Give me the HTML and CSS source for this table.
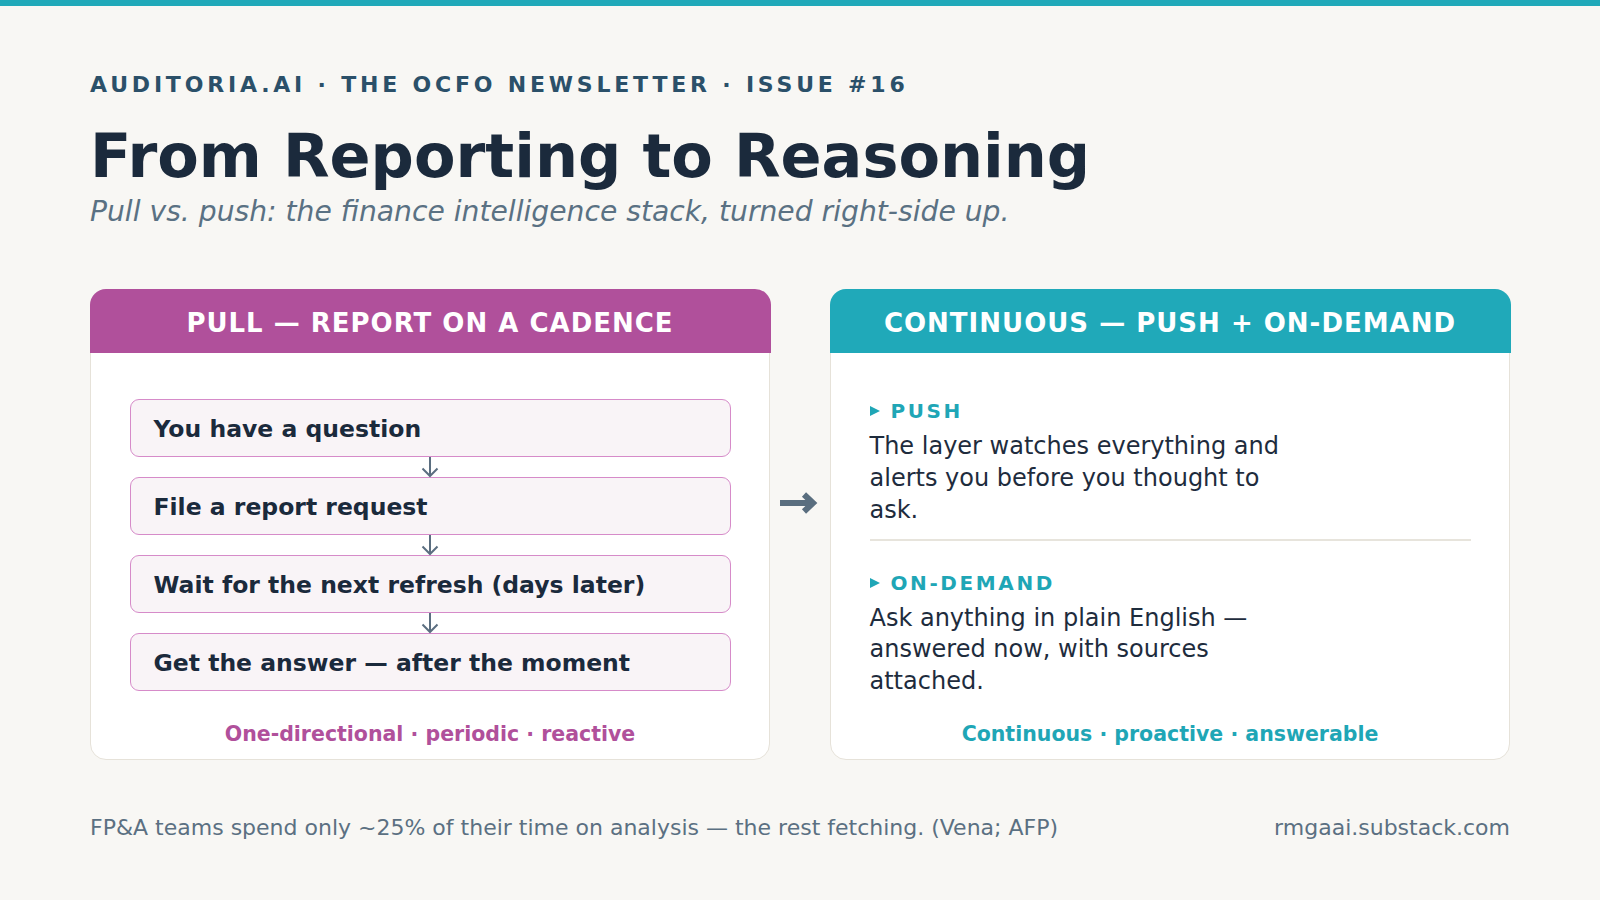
FILE: index.html
```html
<!DOCTYPE html>
<html lang="en">
<head>
<meta charset="utf-8">
<title>From Reporting to Reasoning</title>
<link rel="stylesheet" href="styles.css">
</head>
<body>
<div class="topbar"></div>
<main class="page">
  <header class="intro">
    <div class="kicker">AUDITORIA.AI · THE OCFO NEWSLETTER · ISSUE #16</div>
    <h1 class="title">From Reporting to Reasoning</h1>
    <p class="subtitle">Pull vs. push: the finance intelligence stack, turned right-side up.</p>
  </header>

  <section class="compare">
    <article class="card card-pull">
      <div class="card-head">PULL — REPORT ON A CADENCE</div>
      <div class="card-body">
        <div class="steps">
          <div class="step">You have a question</div>
          <div class="step-arrow"><svg viewBox="0 0 20 20" width="20" height="20"><path d="M10 0V19M2.5 11.5L10 19L17.5 11.5" fill="none" stroke="currentColor" stroke-width="2"/></svg></div>
          <div class="step">File a report request</div>
          <div class="step-arrow"><svg viewBox="0 0 20 20" width="20" height="20"><path d="M10 0V19M2.5 11.5L10 19L17.5 11.5" fill="none" stroke="currentColor" stroke-width="2"/></svg></div>
          <div class="step">Wait for the next refresh (days later)</div>
          <div class="step-arrow"><svg viewBox="0 0 20 20" width="20" height="20"><path d="M10 0V19M2.5 11.5L10 19L17.5 11.5" fill="none" stroke="currentColor" stroke-width="2"/></svg></div>
          <div class="step">Get the answer — after the moment</div>
        </div>
        <div class="card-foot foot-pull">One-directional · periodic · reactive</div>
      </div>
    </article>

    <div class="between">
      <svg class="big-arrow" viewBox="0 0 40 24" width="40" height="24"><path d="M0 12H33M24 3.5L33 12L24 20.5" fill="none" stroke="currentColor" stroke-width="6"/></svg>
    </div>

    <article class="card card-push">
      <div class="card-head">CONTINUOUS — PUSH + ON-DEMAND</div>
      <div class="card-body">
        <div class="mode">
          <div class="mode-label"><svg viewBox="0 0 10 10" width="10" height="10"><path d="M0 0L10 5L0 10Z" fill="currentColor"/></svg><span>PUSH</span></div>
          <p class="mode-text">The layer watches everything and alerts you before you thought to ask.</p>
        </div>
        <hr class="divider">
        <div class="mode mode-second">
          <div class="mode-label"><svg viewBox="0 0 10 10" width="10" height="10"><path d="M0 0L10 5L0 10Z" fill="currentColor"/></svg><span>ON-DEMAND</span></div>
          <p class="mode-text">Ask anything in plain English — answered now, with sources attached.</p>
        </div>
        <div class="card-foot foot-push">Continuous · proactive · answerable</div>
      </div>
    </article>
  </section>

  <footer class="footer">
    <span>FP&amp;A teams spend only ~25% of their time on analysis — the rest fetching. (Vena; AFP)</span>
    <span>rmgaai.substack.com</span>
  </footer>
</main>
</body>
</html>
```

FILE: styles.css
```css
* { box-sizing: border-box; }

html, body {
  margin: 0;
  padding: 0;
}

body {
  width: 1600px;
  height: 900px;
  overflow: hidden;
  background: #f8f7f4;
  font-family: "DejaVu Sans", "Liberation Sans", sans-serif;
  color: #1b2a3c;
}

.topbar {
  height: 6px;
  background: #20a9b9;
}

.page {
  padding: 0 90px;
}

.kicker {
  margin-top: 66.4px;
  font-size: 22px;
  line-height: 26px;
  font-weight: 700;
  letter-spacing: 3.8px;
  color: #2b5069;
  white-space: nowrap;
}

.title {
  margin: 21.8px 0 0;
  font-size: 60.5px;
  line-height: 72px;
  font-weight: 700;
  color: #1b2a3c;
  white-space: nowrap;
}

.subtitle {
  margin: 3px 0 0;
  font-size: 28.2px;
  line-height: 34px;
  font-style: italic;
  color: #5a7183;
  white-space: nowrap;
}

.compare {
  margin-top: 60.7px;
  display: grid;
  grid-template-columns: 680px 60px 680px;
}

.card {
  height: 470px;
  background: #ffffff;
  border: 1.5px solid #e6e2d9;
  border-radius: 16px;
  display: flex;
  flex-direction: column;
}

.card-head {
  margin: -1.5px -1.5px 0;
  height: 64px;
  flex: none;
  border-radius: 16px 16px 0 0;
  display: flex;
  align-items: center;
  justify-content: center;
  padding-top: 3px;
  color: #ffffff;
  font-size: 26px;
  font-weight: 700;
  letter-spacing: 1px;
  white-space: nowrap;
}

.card-pull .card-head { background: #b0509b; }
.card-push .card-head { background: #20a9b9; }

.card-body {
  flex: 1;
  display: flex;
  flex-direction: column;
  padding: 46px 38.5px 12.6px;
}

.steps {
  display: flex;
  flex-direction: column;
}

.step {
  height: 58px;
  display: flex;
  align-items: center;
  padding: 1px 23px 0;
  background: #f9f4f7;
  border: 1.5px solid #d68bc9;
  border-radius: 9px;
  font-size: 23.5px;
  font-weight: 700;
  color: #1b2a3c;
  white-space: nowrap;
}

.step-arrow {
  height: 20px;
  display: flex;
  justify-content: center;
  color: #5b6e80;
  position: relative;
  z-index: 1;
}

.step-arrow svg {
  display: block;
  overflow: visible;
}

.card-foot {
  margin-top: auto;
  text-align: center;
  font-size: 20.5px;
  line-height: 24px;
  font-weight: 700;
  white-space: nowrap;
}

.foot-pull { color: #b0509b; }
.foot-push { color: #1fa6b6; }

.between {
  display: flex;
  justify-content: center;
  align-items: flex-start;
  padding-top: 201px;
  color: #5a6e7f;
}

.big-arrow {
  display: block;
}

.mode-label {
  display: flex;
  align-items: center;
  gap: 11px;
  height: 24px;
  font-size: 20px;
  line-height: 24px;
  font-weight: 700;
  letter-spacing: 2.6px;
  color: #1fa6b6;
}

.mode-label svg {
  display: block;
  flex: none;
}

.mode-text {
  margin: 8px 0 0;
  max-width: 430px;
  font-size: 24px;
  line-height: 31.6px;
  color: #1e2c3d;
}

.divider {
  margin: 13px 0 0;
  border: 0;
  height: 1.5px;
  background: #e7e4dc;
}

.mode-second {
  margin-top: 30px;
}

.footer {
  margin-top: 55.4px;
  display: flex;
  justify-content: space-between;
  font-size: 22px;
  line-height: 26px;
  color: #5b7082;
  white-space: nowrap;
}
```
